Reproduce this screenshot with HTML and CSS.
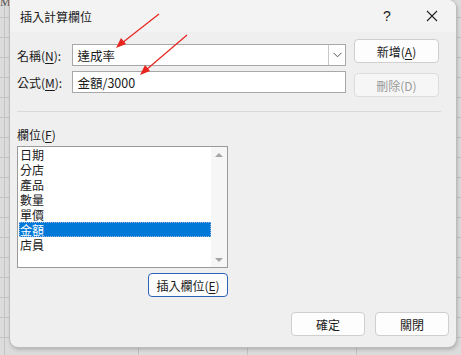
FILE: index.html
```html
<!DOCTYPE html>
<html lang="zh-Hant">
<head>
    <meta charset="UTF-8">
    <meta name="viewport" content="width=device-width, initial-scale=1.0">
    <title>插入計算欄位</title>
    <link rel="stylesheet" href="styles.css">
</head>
<body>
    <div class="sheet-corner">M</div>
    <div class="dialog">
        <div class="title-bar">
            <span class="title">插入計算欄位</span>
            <span class="help">?</span>
            <span class="close">
                <svg width="12" height="12" viewBox="0 0 12 12"><path d="M1 1L11 11M11 1L1 11" stroke="#222" stroke-width="1.1" fill="none"/></svg>
            </span>
        </div>
        <div class="body">
            <div class="top">
                <div class="fields">
                    <div class="row">
                        <label class="lbl">名稱(<u>N</u>):</label>
                        <div class="input combo">
                            <span>達成率</span>
                            <span class="drop">
                                <svg width="9" height="6" viewBox="0 0 9 6"><path d="M0.5 0.8L4.5 4.8L8.5 0.8" stroke="#555" stroke-width="1" fill="none"/></svg>
                            </span>
                        </div>
                    </div>
                    <div class="row">
                        <label class="lbl">公式(<u>M</u>):</label>
                        <div class="input"><span>金額/3000</span></div>
                    </div>
                </div>
                <div class="side">
                    <button class="btn">新增(<u>A</u>)</button>
                    <button class="btn disabled">刪除(D)</button>
                </div>
            </div>
            <div class="sep"></div>
            <div class="list-label">欄位(<u>F</u>)</div>
            <div class="listbox">
                <ul class="items">
                    <li>日期</li>
                    <li>分店</li>
                    <li>產品</li>
                    <li>數量</li>
                    <li>單價</li>
                    <li class="selected">金額</li>
                    <li>店員</li>
                </ul>
                <div class="scroll">
                    <span class="arrow up"></span>
                    <span class="arrow down"></span>
                </div>
            </div>
            <div class="insert-row">
                <button class="btn focus">插入欄位(<u>E</u>)</button>
            </div>
            <div class="footer">
                <button class="btn wide">確定</button>
                <button class="btn wide">關閉</button>
            </div>
        </div>
        <svg class="arrows" width="200" height="90" viewBox="0 0 200 90">
            <path d="M159 14L122 43" stroke="#e8241e" stroke-width="1.2" fill="none"/>
            <path d="M116 48L121 38L126 44Z" fill="#e8241e"/>
            <path d="M187 35L146 70" stroke="#e8241e" stroke-width="1.2" fill="none"/>
            <path d="M140 75L145 65L150 71Z" fill="#e8241e"/>
        </svg>
    </div>
</body>
</html>
```

FILE: styles.css
```css
body {
    margin: 0;
    width: 461px;
    height: 355px;
    overflow: hidden;
    font-family: "Noto Sans CJK TC", "Liberation Sans", sans-serif;
    font-size: 12px;
    color: #1a1a1a;
    background-color: #dcdcdc;
    background-image:
        repeating-linear-gradient(to bottom, transparent 0, transparent 19px, #c4c4c4 19px, #c4c4c4 20px),
        repeating-linear-gradient(to right, transparent 0, transparent 108px, #c4c4c4 108px, #c4c4c4 109px);
    background-position: 0 -2px, 30px 0;
    position: relative;
}
.sheet-corner {
    position: absolute;
    left: 0;
    top: -4px;
    font-family: "Liberation Serif", serif;
    font-size: 12px;
    line-height: 12px;
    color: #555;
}
.dialog {
    position: absolute;
    left: 10px;
    top: 0;
    width: 446px;
    height: 347px;
    background: #efefef;
    border-radius: 0 8px 8px 8px;
    box-shadow: 0 0 0 1px #bdbdbd, 1px 2px 4px rgba(0, 0, 0, 0.25);
    overflow: hidden;
}
.title-bar {
    height: 32px;
    background: #f3f3f3;
    display: flex;
    align-items: center;
}
.title {
    margin-left: 10px;
    flex: 1;
    font-size: 12px;
}
.help {
    width: 18px;
    text-align: center;
    font-family: "Liberation Sans", sans-serif;
    font-size: 14px;
    margin-right: 30px;
}
.close {
    width: 14px;
    margin-right: 16px;
    display: flex;
    align-items: center;
}
.body {
    padding: 7px 7px 0 7px;
}
.top {
    display: flex;
}
.fields {
    width: 329px;
    padding-top: 5px;
    display: flex;
    flex-direction: column;
    gap: 5px;
}
.row {
    display: flex;
    align-items: center;
}
.lbl {
    width: 56px;
}
u {
    text-decoration-thickness: 1px;
    text-underline-offset: 2px;
}
.input {
    width: 270px;
    height: 20px;
    background: #fff;
    border: 1px solid #a8a8a8;
    display: flex;
    align-items: center;
    padding-left: 4px;
    box-sizing: content-box;
    font-size: 12.5px;
}
.input span:first-child {
    flex: 1;
}
.combo {
    width: 270px;
}
.drop {
    width: 16px;
    height: 20px;
    border-left: 1px solid #c8c8c8;
    display: flex;
    align-items: center;
    justify-content: center;
}
.side {
    margin-left: 8px;
    display: flex;
    flex-direction: column;
    gap: 10px;
}
.btn {
    font-family: "Noto Sans CJK TC", "Liberation Sans", sans-serif;
    font-size: 12px;
    color: #1a1a1a;
    background: #fdfdfd;
    border: 1px solid #cfcfcf;
    border-radius: 4px;
    width: 85px;
    height: 24px;
    padding: 0;
}
.btn.disabled {
    color: #9a9a9a;
    background: #f6f6f6;
    border-color: #dddddd;
}
.btn.focus {
    width: 80px;
    border: 1px solid #2a63b8;
}
.sep {
    margin: 14px 8px 0 0;
    height: 1px;
    background: #dadada;
}
.list-label {
    margin-top: 13px;
    height: 20px;
    line-height: 20px;
}
.listbox {
    width: 209px;
    height: 120px;
    background: #fff;
    border: 1px solid #9a9a9a;
    display: flex;
    margin-top: 1px;
}
.items {
    list-style: none;
    margin: 0;
    padding: 0 0 0 1px;
    width: 192px;
    font-size: 12px;
}
.items li {
    height: 15px;
    line-height: 15px;
    padding-left: 1px;
}
.items li.selected {
    background: #0078d7;
    color: #fff;
    outline: 1px dotted #9bb9de;
    outline-offset: -1px;
}
.scroll {
    flex: 1;
    background: #f6f6f6;
    display: flex;
    flex-direction: column;
    justify-content: space-between;
    align-items: center;
    padding: 6px 0 5px;
}
.arrow {
    width: 0;
    height: 0;
    border-left: 4px solid transparent;
    border-right: 4px solid transparent;
}
.arrow.up {
    border-bottom: 4px solid #a5a5a5;
}
.arrow.down {
    border-top: 4px solid #a5a5a5;
}
.insert-row {
    width: 211px;
    display: flex;
    justify-content: flex-end;
    margin-top: 5px;
}
.footer {
    display: flex;
    justify-content: flex-end;
    gap: 10px;
    margin-top: 15px;
    margin-right: 0;
}
.btn.wide {
    width: 74px;
}
.arrows {
    position: absolute;
    left: -10px;
    top: 0;
}
```
